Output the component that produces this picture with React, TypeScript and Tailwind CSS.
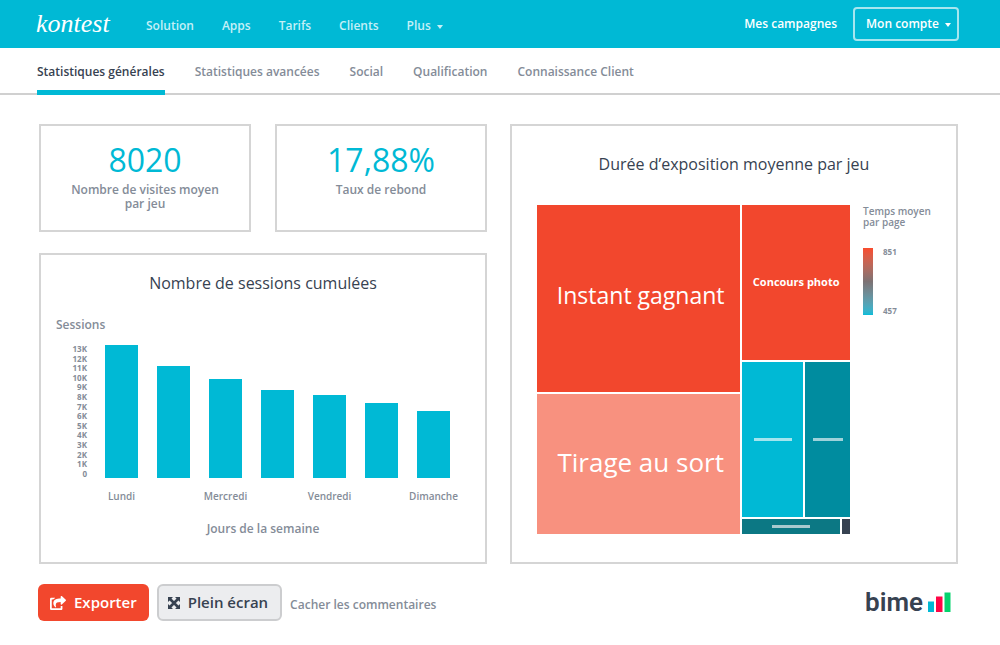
import React from "react";
import { FaShareSquare } from "react-icons/fa";

const navLinks = ["Solution", "Apps", "Tarifs", "Clients"];

const tabs = [
  "Statistiques générales",
  "Statistiques avancées",
  "Social",
  "Qualification",
  "Connaissance Client",
];

const scale = ["13K", "12K", "11K", "10K", "9K", "8K", "7K", "6K", "5K", "4K", "3K", "2K", "1K", "0"];

const days = [
  { height: 133, label: "Lundi" },
  { height: 112, label: "" },
  { height: 99, label: "Mercredi" },
  { height: 88, label: "" },
  { height: 83, label: "Vendredi" },
  { height: 75, label: "" },
  { height: 67, label: "Dimanche" },
];

function Caret() {
  return (
    <svg viewBox="0 0 6 4" className="mt-0.5 h-1 w-1.5" fill="currentColor" aria-hidden="true">
      <path d="M0 0h6L3 4z" />
    </svg>
  );
}

function ExpandIcon() {
  return (
    <svg viewBox="0 0 12 12" className="size-3" aria-hidden="true">
      <path d="M0 0h5L0 5zM12 0v5L7 0zM0 12V7l5 5zM12 12H7l5-5z" fill="currentColor" />
      <path d="M2 2l8 8M10 2l-8 8" stroke="currentColor" strokeWidth="2.600" />
    </svg>
  );
}

function Header() {
  return (
    <header className="flex h-12 items-center bg-[#00b9d5] pr-[41px] pl-9 text-xs font-semibold text-white">
      <a href="#" className="w-[110px] font-['Liberation_Serif',serif] text-[26px] leading-8 font-normal italic">
        kontest
      </a>
      <nav className="flex items-center gap-7 pt-1 text-[#c4f0f7]">
        {navLinks.map((label) => (
          <a key={label} href="#">
            {label}
          </a>
        ))}
        <button type="button" className="flex items-center gap-1.5">
          Plus <Caret />
        </button>
      </nav>
      <div className="ml-auto flex items-center gap-4">
        <a href="#">Mes campagnes</a>
        <button
          type="button"
          className="flex h-[34px] items-center gap-1.5 rounded border-2 border-[#a6e6ef] pr-1.5 pl-[11px]"
        >
          Mon compte <Caret />
        </button>
      </div>
    </header>
  );
}

function Tabs() {
  return (
    <nav className="flex h-[47px] gap-[30px] border-b-2 border-[#d0d0d0] pl-[37px] text-xs leading-[47px] font-semibold text-[#848c98]">
      {tabs.map((label, i) => (
        <a
          key={label}
          href="#"
          className={i === 0 ? "h-[47px] border-b-[5px] border-[#00b9d5] text-[#374251]" : "h-[47px]"}
        >
          {label}
        </a>
      ))}
    </nav>
  );
}

function Figure({ value, children }: { value: string; children: React.ReactNode }) {
  return (
    <section className="h-[108px] border-2 border-[#d5d5d5] pt-3.5 text-center">
      <p className="text-[32px] leading-10 text-[#00b9d5]">{value}</p>
      <h2 className="pt-[3px] text-xs leading-[14px] font-semibold text-[#848c98]">{children}</h2>
    </section>
  );
}

function SessionsChart() {
  return (
    <section className="flex h-[311px] flex-col border-2 border-[#d5d5d5] pr-[35px] pl-[15px] text-[#848c98]">
      <h2 className="pt-4 pl-5 text-center text-base leading-6 text-[#374251]">
        Nombre de sessions cumulées
      </h2>
      <p className="pt-[22px] text-xs leading-4 font-semibold">Sessions</p>
      <div className="mt-3 flex h-[133px] items-stretch">
        <ul className="flex w-[31px] flex-col justify-between text-right text-[8px] leading-2 font-bold">
          {scale.map((s) => (
            <li key={s}>{s}</li>
          ))}
        </ul>
        <ul className="ml-[18px] flex flex-1 items-end justify-between">
          {days.map((d, i) => (
            <li key={i} className="w-[33px] bg-[#00b9d5]" style={{ height: d.height }} />
          ))}
        </ul>
      </div>
      <div className="flex justify-between pt-[11px] pl-[49px] text-[10px] leading-[14px] font-semibold">
        {days.map((d, i) => (
          <span key={i} className="flex w-[33px] justify-center whitespace-nowrap">
            {d.label}
          </span>
        ))}
      </div>
      <p className="pt-[18px] pl-5 text-center text-xs leading-4 font-semibold">Jours de la semaine</p>
    </section>
  );
}

function ExposureMap() {
  return (
    <section className="border-2 border-[#d5d5d5] px-[25px]">
      <h2 className="pt-[26px] text-center text-base leading-6 text-[#374251]">
        Durée d’exposition moyenne par jeu
      </h2>
      <div className="flex gap-[13px] pt-[29px]">
        <div className="flex h-[329px] flex-1 gap-0.5 text-white">
          <div className="flex flex-[204] flex-col gap-0.5">
            <div className="flex flex-[187] items-center justify-center bg-[#f2472d] text-[23px] leading-8">
              <span className="pb-2 pl-1">Instant gagnant</span>
            </div>
            <div className="flex flex-[140] items-center justify-center bg-[#f8917f] text-[26px] leading-8">
              <span className="pb-1 pl-1">Tirage au sort</span>
            </div>
          </div>
          <div className="flex flex-[108] flex-col gap-0.5">
            <div className="flex flex-[155] items-center justify-center bg-[#f2472d] text-[11px] font-bold">
              Concours photo
            </div>
            <div className="flex flex-[155] gap-0.5">
              <div className="flex flex-[61] items-center justify-center bg-[#00b9d5]">
                <span className="h-[3px] w-[38px] bg-[#a3e5ee]" />
              </div>
              <div className="flex flex-[45] items-center justify-center bg-[#008c9f]">
                <span className="h-[3px] w-[30px] bg-[#9ed2da]" />
              </div>
            </div>
            <div className="flex flex-[15] gap-0.5">
              <div className="flex flex-[98] items-center justify-center bg-[#0c7884]">
                <span className="h-[3px] w-[38px] bg-[#a9c9ce]" />
              </div>
              <div className="flex-[8] bg-[#374251]" />
            </div>
          </div>
        </div>
        <div className="w-[68px] text-[#848c98]">
          <h3 className="pt-px text-[10px] leading-[11px] font-semibold whitespace-nowrap">
            Temps moyen
            <br />
            par page
          </h3>
          <div className="mt-5 flex h-[67px] gap-2.5">
            <div className="w-2.5 bg-linear-to-b from-[#f94b2d] via-[#7c7274] to-[#00bcd8]" />
            <div className="flex flex-col justify-between text-[8px] leading-2 font-bold">
              <span>851</span>
              <span>457</span>
            </div>
          </div>
        </div>
      </div>
    </section>
  );
}

function Footer() {
  return (
    <footer className="flex items-center pt-5 pr-[49px] pb-6 pl-[38px]">
      <button
        type="button"
        className="flex h-[37px] items-center gap-2 rounded-md bg-[#f2472d] px-3 text-[15px] font-semibold text-white"
      >
        <FaShareSquare className="size-4" />
        Exporter
      </button>
      <button
        type="button"
        className="ml-2 flex h-[37px] items-center gap-2 rounded-md border-2 border-[#cccdcf] bg-[#ecedef] pr-3 pl-[9px] text-[15px] font-semibold text-[#374251]"
      >
        <ExpandIcon />
        Plein écran
      </button>
      <a href="#" className="ml-2 pt-1 text-xs font-semibold text-[#848c98]">
        Cacher les commentaires
      </a>
      <div className="ml-auto flex items-center gap-1 pb-0.5">
        <span className="font-['Roboto',sans-serif] text-[26px] leading-8 font-semibold text-[#374251]">bime</span>
        <svg viewBox="0 0 24 20" className="h-5 w-6" aria-hidden="true">
          <path d="M1 9.500h6V20H1z" fill="#00b9d5" />
          <path d="M9 4.500h6.500V20H9z" fill="#ff0546" />
          <path d="M17.500 .5H23.500V20H17.500z" fill="#04d36d" />
        </svg>
      </div>
    </footer>
  );
}

export default function App() {
  return (
    <div className="min-h-screen bg-white font-['Open_Sans',sans-serif]">
      <Header />
      <Tabs />
      <main className="grid grid-cols-2 gap-[23px] pt-[29px] pr-[42px] pl-[39px]">
        <div className="flex flex-col gap-[21px]">
          <div className="grid grid-cols-2 gap-6">
            <Figure value="8020">
              Nombre de visites moyen
              <br />
              par jeu
            </Figure>
            <Figure value="17,88%">Taux de rebond</Figure>
          </div>
          <SessionsChart />
        </div>
        <ExposureMap />
      </main>
      <Footer />
    </div>
  );
}
